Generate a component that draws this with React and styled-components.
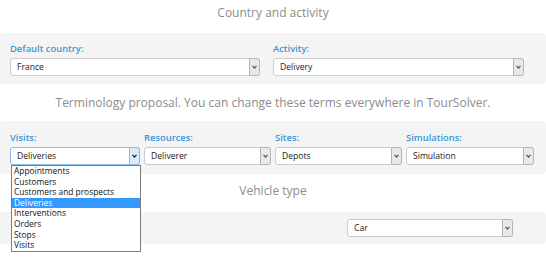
import React from "react";
import styled, { createGlobalStyle, css } from "styled-components";

const GlobalStyle = createGlobalStyle`
  html, body {
    margin: 0;
    padding: 0;
    background: #ffffff;
    font-family: "Open Sans", "Noto Sans", sans-serif;
  }
`;

const Page = styled.div`
  width: 546px;
  height: 259px;
  overflow: hidden;
  position: relative;
`;

const SectionTitle = styled.div`
  height: ${(p) => p.h}px;
  display: flex;
  align-items: center;
  justify-content: center;
  padding-bottom: ${(p) => p.pb || 0}px;
  box-sizing: border-box;
  color: #8c8c8c;
  font-size: 12px;
`;

const Panel = styled.div`
  background: #f4f4f4;
  border-radius: 4px;
  padding: ${(p) => p.pad};
  display: grid;
  grid-template-columns: ${(p) => p.cols};
  column-gap: ${(p) => p.gap}px;
`;

const Field = styled.div`
  position: relative;
  display: flex;
  flex-direction: column;
`;

const Label = styled.div`
  color: #3a97d4;
  font-size: 9.4px;
  font-weight: 600;
  line-height: 14px;
  margin-bottom: 2px;
`;

const Select = styled.div`
  height: 18px;
  box-sizing: border-box;
  border: 1px solid #cdcdcd;
  border-radius: 3px;
  background: #ffffff;
  display: flex;
  align-items: center;
  font-size: 8.6px;
  color: #222;
  ${(p) =>
    p.focused &&
    css`
      border-color: #8cbbe8;
    `}
`;

const Value = styled.span`
  flex: 1;
  padding-left: 6px;
  white-space: nowrap;
`;

const Arrow = styled.span`
  width: 11px;
  height: 18px;
  margin: -1px -1px -1px 0;
  box-sizing: border-box;
  border: 1px solid ${(p) => (p.focused ? "#8cbbe8" : "#b4b4b4")};
  border-radius: 0 3px 3px 0;
  background: ${(p) => (p.focused ? "#dcebf8" : "#e9e9e9")};
  display: flex;
  align-items: center;
  justify-content: center;
`;

const List = styled.ul`
  position: absolute;
  top: 34px;
  left: 1px;
  width: 128px;
  margin: 0;
  padding: 0;
  list-style: none;
  border: 1px solid #7a7a7a;
  background: #fff;
  z-index: 5;
`;

const Item = styled.li`
  font-size: 8.4px;
  height: 10.6px;
  line-height: 10.6px;
  padding-left: 2px;
  white-space: nowrap;
  color: ${(p) => (p.active ? "#fff" : "#111")};
  background: ${(p) => (p.active ? "#3399ff" : "transparent")};
`;

const VehicleRow = styled.div`
  background: #f4f4f4;
  border-radius: 4px;
  padding: 7px 0 7px 347px;
`;

const VehicleSelect = styled.div`
  width: 166px;
`;

const Chevron = ({ color = "#444" }) => (
  <svg width="5" height="4" viewBox="0 0 5 4">
    <path d="M0.5 0.8 L2.5 3 L4.5 0.8" fill="none" stroke={color} strokeWidth="1.2" />
  </svg>
);

const Dropdown = ({ value, focused }) => (
  <Select focused={focused}>
    <Value>{value}</Value>
    <Arrow focused={focused}>
      <Chevron color={focused ? "#223" : "#555"} />
    </Arrow>
  </Select>
);

const options = [
  "Appointments",
  "Customers",
  "Customers and prospects",
  "Deliveries",
  "Interventions",
  "Orders",
  "Stops",
  "Visits",
];

export default function App() {
  return (
    <Page>
      <GlobalStyle />
      <SectionTitle h={33} pb={9}>Country and activity</SectionTitle>
      <Panel pad="9px 10px 8px" cols="250px 251px" gap={13}>
        <Field>
          <Label>Default country:</Label>
          <Dropdown value="France" />
        </Field>
        <Field>
          <Label>Activity:</Label>
          <Dropdown value="Delivery" />
        </Field>
      </Panel>
      <SectionTitle h={37} pb={1}>
        Terminology proposal. You can change these terms everywhere in TourSolver.
      </SectionTitle>
      <Panel pad="10px 11px 9px 10px" cols="130px 127px 127px 128px" gap={4}>
        <Field>
          <Label>Visits:</Label>
          <Dropdown value="Deliveries" focused />
          <List>
            {options.map((o) => (
              <Item key={o} active={o === "Deliveries"}>
                {o}
              </Item>
            ))}
          </List>
        </Field>
        <Field>
          <Label>Resources:</Label>
          <Dropdown value="Deliverer" />
        </Field>
        <Field>
          <Label>Sites:</Label>
          <Dropdown value="Depots" />
        </Field>
        <Field>
          <Label>Simulations:</Label>
          <Dropdown value="Simulation" />
        </Field>
      </Panel>
      <SectionTitle h={38} pb={5}>Vehicle type</SectionTitle>
      <VehicleRow>
        <VehicleSelect>
          <Dropdown value="Car" />
        </VehicleSelect>
      </VehicleRow>
    </Page>
  );
}
